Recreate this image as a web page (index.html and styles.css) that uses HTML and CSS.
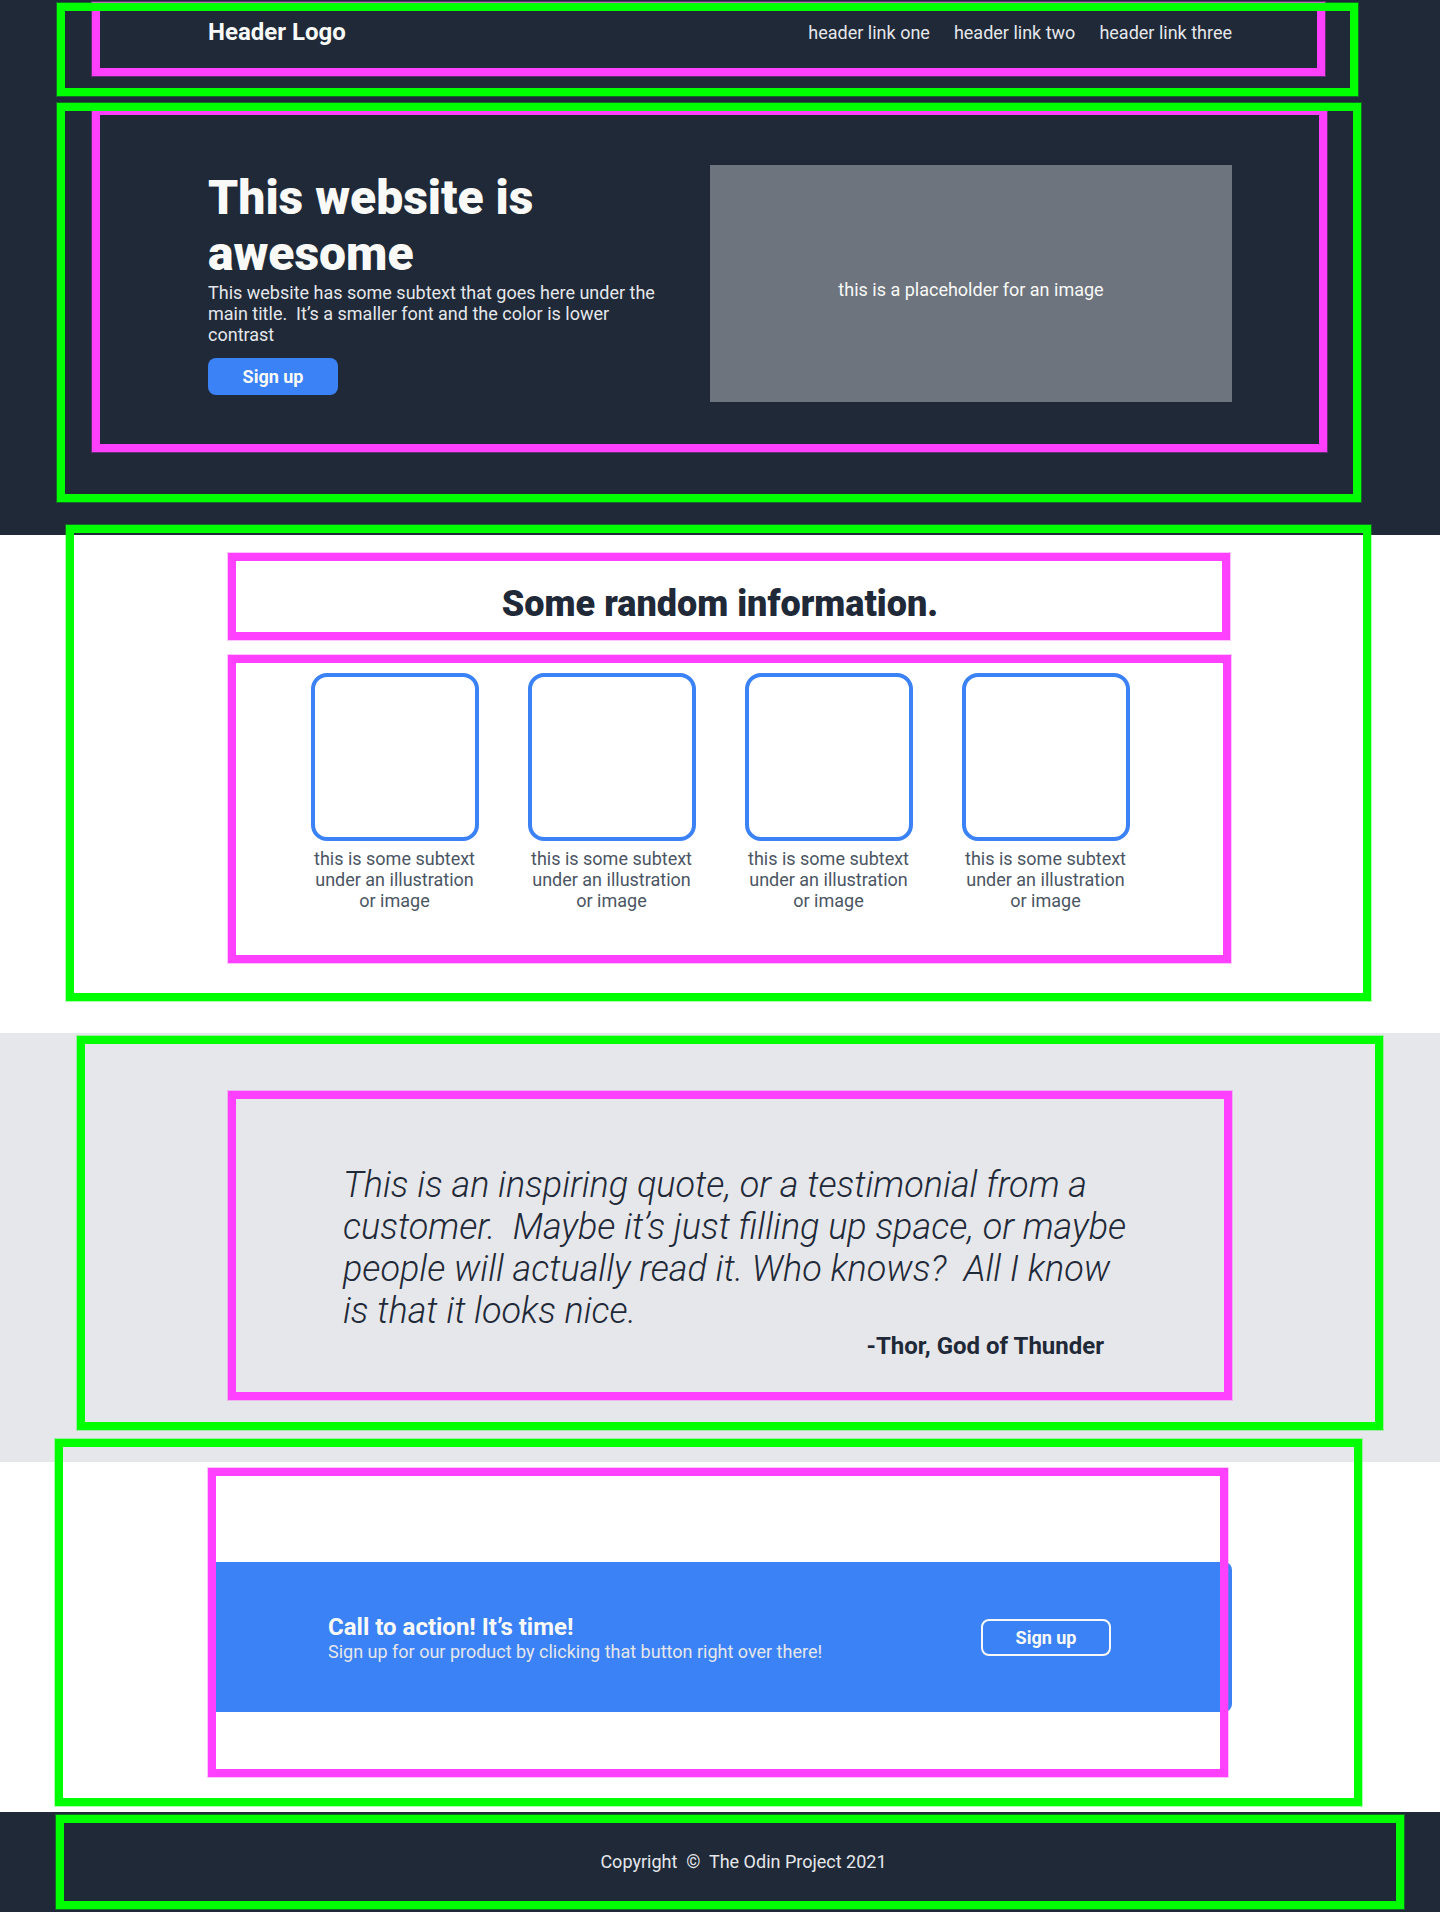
FILE: index.html
```html
<!DOCTYPE html>
<html lang="en">
<head>
  <meta charset="utf-8">
  <meta name="viewport" content="width=device-width, initial-scale=1">
  <title>Header Logo</title>
  <link rel="stylesheet" href="styles.css">
</head>
<body>
  <header class="section header">
    <div class="container header-row">
      <a class="logo" href="#">Header Logo</a>
      <nav class="links">
        <a href="#">header link one</a>
        <a href="#">header link two</a>
        <a href="#">header link three</a>
      </nav>
    </div>
    <span class="frame inner header-inner" aria-hidden="true"></span>
    <span class="frame outer header-outer" aria-hidden="true"></span>
  </header>

  <main>
    <section class="section hero">
      <div class="container hero-row">
        <div class="hero-text">
          <h1>This website is awesome</h1>
          <p>This website has some subtext that goes here under the main title.&nbsp; It’s a smaller font and the color is lower contrast</p>
          <button class="button" type="button">Sign up</button>
        </div>
        <div class="placeholder">this is a placeholder for an image</div>
      </div>
      <span class="frame inner hero-inner" aria-hidden="true"></span>
      <span class="frame outer hero-outer" aria-hidden="true"></span>
    </section>

    <section class="section info">
      <div class="container info-title">
        <h2>Some random information.</h2>
        <span class="frame inner title-inner" aria-hidden="true"></span>
      </div>
      <div class="container cards">
        <figure class="card">
          <div class="picture"></div>
          <figcaption>this is some subtext under an illustration or image</figcaption>
        </figure>
        <figure class="card">
          <div class="picture"></div>
          <figcaption>this is some subtext under an illustration or image</figcaption>
        </figure>
        <figure class="card">
          <div class="picture"></div>
          <figcaption>this is some subtext under an illustration or image</figcaption>
        </figure>
        <figure class="card">
          <div class="picture"></div>
          <figcaption>this is some subtext under an illustration or image</figcaption>
        </figure>
        <span class="frame inner cards-inner" aria-hidden="true"></span>
      </div>
      <span class="frame outer info-outer" aria-hidden="true"></span>
    </section>

    <section class="section quote">
      <div class="container quote-body">
        <blockquote>This is an inspiring quote, or a testimonial from a customer.&nbsp; Maybe it’s just filling up space, or maybe people will actually read it. Who knows?&nbsp; All I know is that it looks nice.</blockquote>
        <p class="author">-Thor, God of Thunder</p>
        <span class="frame inner quote-inner" aria-hidden="true"></span>
      </div>
      <span class="frame outer quote-outer" aria-hidden="true"></span>
    </section>

    <section class="section action">
      <div class="container action-box">
        <div class="action-text">
          <h3>Call to action! It’s time!</h3>
          <p>Sign up for our product by clicking that button right over there!</p>
        </div>
        <button class="button outlined" type="button">Sign up</button>
        <span class="frame inner action-inner" aria-hidden="true"></span>
      </div>
      <span class="frame outer action-outer" aria-hidden="true"></span>
    </section>
  </main>

  <footer class="section footer">
    <p>Copyright&nbsp; ©&nbsp; The Odin Project 2021</p>
    <span class="frame outer footer-outer" aria-hidden="true"></span>
  </footer>
</body>
</html>
```

FILE: styles.css
```css
:root {
  --dark: #1f2937;
  --light: #e5e7eb;
  --bright: #f9faf8;
  --blue: #3b82f6;
}

* {
  box-sizing: border-box;
}

body,
h1,
h2,
h3,
p,
figure,
blockquote {
  margin: 0;
}

body {
  background: #fff;
  color: var(--dark);
  font-family: Roboto, "Liberation Sans", sans-serif;
  font-size: 18px;
  line-height: 21px;
}

a {
  color: inherit;
  text-decoration: none;
}

.section {
  position: relative;
}

.container {
  position: relative;
  max-width: 1024px;
  margin: 0 auto;
}

/* Outlines marking the outer and inner containers of each section */
.frame {
  position: absolute;
  border: 8px solid;
  pointer-events: none;
}

.outer {
  z-index: 2;
  border-color: #00ff00;
  box-shadow: 0 0 0 1px rgba(0, 255, 0, 0.3);
}

.inner {
  z-index: 1;
  border-color: #ff40ff;
  box-shadow: 0 0 0 1px rgba(255, 64, 255, 0.3);
}

/* Header */
.header,
.hero,
.footer {
  background: var(--dark);
}

.header {
  padding: 18px 0;
}

.header-row {
  display: flex;
  justify-content: space-between;
  align-items: center;
}

.logo {
  color: var(--bright);
  font-size: 24px;
  font-weight: 700;
  line-height: 28px;
}

.links {
  display: flex;
  gap: 24px;
  color: var(--light);
}

.header-inner {
  inset: 2px 115px -12px 92px;
}

.header-outer {
  inset: 3px 82px -32px 57px;
}

/* Hero */
.hero {
  padding: 101px 0 133px;
}

.hero-row {
  display: grid;
  grid-template-columns: 452px 522px;
  justify-content: space-between;
  align-items: center;
}

.hero-text {
  padding-bottom: 3px;
  color: var(--light);
}

.hero-text h1 {
  color: var(--bright);
  font-size: 48px;
  font-weight: 900;
  line-height: 56px;
}

.button {
  display: block;
  width: 130px;
  height: 37px;
  padding: 0;
  border: 0;
  border-radius: 8px;
  background: var(--blue);
  color: var(--bright);
  font: inherit;
  font-weight: 700;
}

.hero-text .button {
  margin-top: 13px;
}

.placeholder {
  display: flex;
  justify-content: center;
  align-items: center;
  height: 237px;
  padding-top: 12px;
  background: #6d747d;
  color: var(--bright);
}

.hero-inner {
  inset: 43px 113px 83px 92px;
}

.hero-outer {
  inset: 39px 79px 33px 57px;
}

/* Information */
.info {
  padding: 48px 0 122px;
}

.info h2 {
  font-size: 36px;
  font-weight: 900;
  line-height: 42px;
  text-align: center;
}

.cards {
  display: flex;
  justify-content: center;
  gap: 49px;
  margin-top: 48px;
}

.card {
  width: 168px;
  color: #4b5563;
  text-align: center;
}

.picture {
  height: 168px;
  margin-bottom: 7px;
  border: 4px solid var(--blue);
  border-radius: 16px;
}

.title-inner {
  inset: -30px 2px -15px 20px;
}

.cards-inner {
  inset: -18px 1px -52px 20px;
}

.info-outer {
  inset: -10px 69px 32px 66px;
}

/* Quote */
.quote {
  padding: 131px 0 102px;
  background: var(--light);
}

.quote-body {
  padding: 0 94px 0 135px;
}

blockquote {
  font-size: 36px;
  font-style: italic;
  font-weight: 300;
  line-height: 42px;
}

.author {
  padding-right: 34px;
  font-size: 24px;
  font-weight: 700;
  line-height: 28px;
  text-align: right;
}

.quote-inner {
  inset: -73px 0 -40px 20px;
}

.quote-outer {
  inset: 3px 57px 32px 77px;
}

/* Call to action */
.action {
  padding: 100px 0;
}

.action-box {
  display: flex;
  justify-content: space-between;
  align-items: center;
  padding: 51px 121px 50px 120px;
  border-radius: 8px;
  background: var(--blue);
}

.action-text {
  color: var(--light);
}

.action-text h3 {
  color: var(--bright);
  font-size: 24px;
  font-weight: 700;
  line-height: 28px;
}

.outlined {
  border: 2px solid var(--bright);
}

.action-inner {
  inset: -94px 4px -65px 0;
}

.action-outer {
  inset: -23px 78px 6px 55px;
}

/* Footer */
.footer {
  padding: 39px 0 40px 47px;
  color: var(--light);
  text-align: center;
}

.footer-outer {
  inset: 3px 36px 3px 56px;
}
```
